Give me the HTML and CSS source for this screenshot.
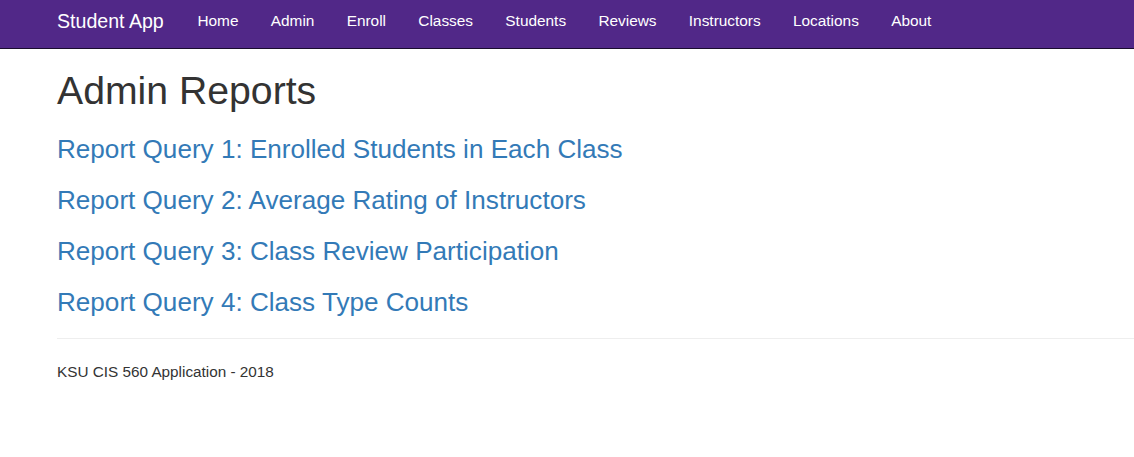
FILE: index.html
```html
<!DOCTYPE html>
<html lang="en">
<head>
<meta charset="utf-8">
<title>Admin Reports - Student App</title>
<link rel="stylesheet" href="styles.css">
</head>
<body>
<nav class="navbar">
  <a class="brand" href="#">Student App</a>
  <ul class="nav-links">
    <li><a href="#">Home</a></li>
    <li><a href="#">Admin</a></li>
    <li><a href="#">Enroll</a></li>
    <li><a href="#">Classes</a></li>
    <li><a href="#">Students</a></li>
    <li><a href="#">Reviews</a></li>
    <li><a href="#">Instructors</a></li>
    <li><a href="#">Locations</a></li>
    <li><a href="#">About</a></li>
  </ul>
</nav>
<main class="content">
  <h1 class="page-title">Admin Reports</h1>
  <div class="report-list">
    <h3 class="report"><a href="#">Report Query 1: Enrolled Students in Each Class</a></h3>
    <h3 class="report"><a href="#">Report Query 2: Average Rating of Instructors</a></h3>
    <h3 class="report"><a href="#">Report Query 3: Class Review Participation</a></h3>
    <h3 class="report"><a href="#">Report Query 4: Class Type Counts</a></h3>
  </div>
  <hr class="divider">
  <footer class="footer">
    <p>KSU CIS 560 Application - 2018</p>
  </footer>
</main>
</body>
</html>
```

FILE: styles.css
```css
html, body {
  margin: 0;
  padding: 0;
}

body {
  font-family: "Liberation Sans", Arial, Helvetica, sans-serif;
  color: #333333;
  background: #ffffff;
  font-size: 15.3px;
  line-height: 22px;
}

a {
  text-decoration: none;
}

.navbar {
  display: flex;
  align-items: flex-start;
  height: 48px;
  background: #512888;
  border-bottom: 1px solid #1a0d2e;
  padding-left: 57px;
}

.brand {
  color: #ffffff;
  font-size: 19.6px;
  line-height: 22px;
  padding: 10px 17.5px 0 0;
}

.nav-links {
  display: flex;
  list-style: none;
  margin: 0;
  padding: 0;
}

.nav-links a {
  display: block;
  color: #ffffff;
  font-size: 15.4px;
  line-height: 22px;
  padding: 10px 16.15px 0;
}

.content {
  display: flex;
  flex-direction: column;
}

.page-title {
  margin: 19.5px 0 0 57px;
  font-size: 39.2px;
  line-height: 43.56px;
  font-weight: 500;
  color: #333333;
}

.report-list {
  display: flex;
  flex-direction: column;
  gap: 22px;
  margin: 23px 0 0 57px;
}

.report {
  margin: 0;
  font-size: 26.1px;
  line-height: 29px;
  font-weight: 500;
}

.report a {
  color: #337ab7;
}

.divider {
  margin: 21px 0 0 57px;
  border: 0;
  border-top: 1px solid #eeeeee;
  height: 0;
}

.footer {
  padding-left: 57px;
}

.footer p {
  margin: 21.5px 0 0;
  font-size: 15.3px;
  line-height: 22px;
}
```
